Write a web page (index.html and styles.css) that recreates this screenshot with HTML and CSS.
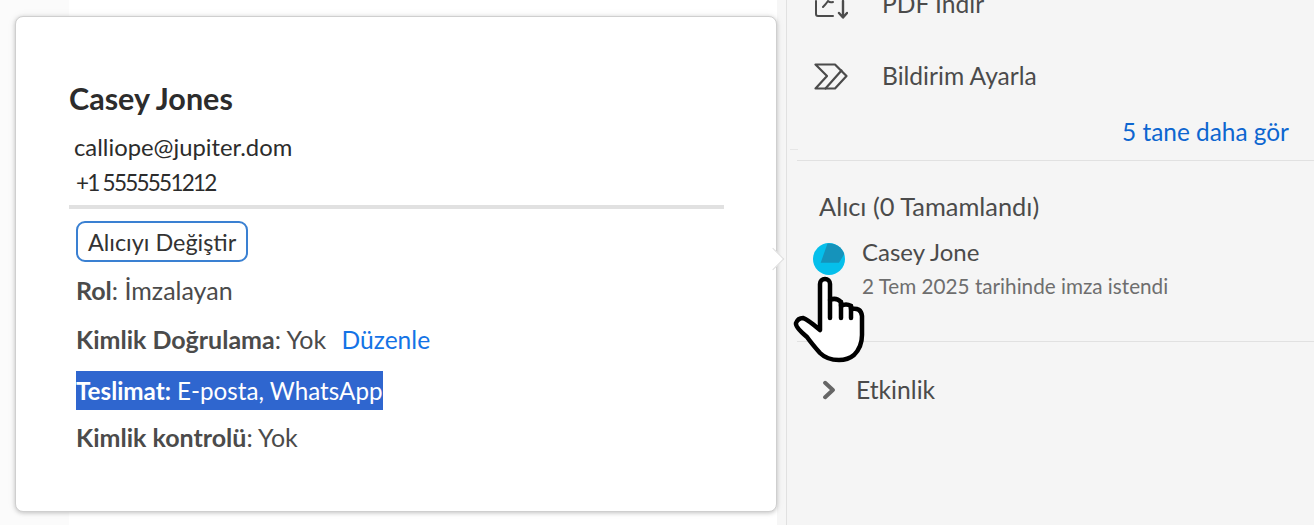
FILE: index.html
```html
<!DOCTYPE html>
<html lang="tr">
<head>
<meta charset="utf-8">
<title>Alıcı</title>
<link rel="stylesheet" href="styles.css">
</head>
<body>
<div class="page">
  <main class="doc"><div class="strip"></div></main>
  <aside class="panel">
    <div class="actions">
      <div class="action">
        <svg class="aicon" viewBox="0 0 34 34" fill="none" stroke="#4b4b4b" stroke-width="2" stroke-linecap="round" stroke-linejoin="round"><path d="M2 14v13q0 2 2 2h15"/><path d="M9 20q3-3 5-6 2 2 5 1"/><path d="M29 14v16M25 26l4 4.500 4-4.500" stroke-width="2.400"/></svg>
        <span>PDF İndir</span>
      </div>
      <div class="action">
        <svg class="aicon" viewBox="0 -5 34 34" fill="none" stroke="#4b4b4b" stroke-width="2.200" stroke-linecap="round" stroke-linejoin="round"><path d="M1.500 1.500H21L32.500 13 21 25.500H1.500L13 13z"/><path d="M27.500 7.500 11.500 25.500"/></svg>
        <span class="label-low">Bildirim Ayarla</span>
      </div>
      <a class="more">5 tane daha gör</a>
    </div>
    <section class="recipients">
      <h2 class="rtitle">Alıcı (0 Tamamlandı)</h2>
      <div class="recipient">
        <svg class="avatar" viewBox="0 0 32 32"><circle cx="16" cy="16" r="16" fill="#05bfeb"/><path d="M14.500.5 7.700 19.700H26L31.300 11A16 16 0 0 0 14.500.5z" fill="#1593bb"/></svg>
        <div class="rinfo">
          <div class="rname">Casey Jone</div>
          <div class="rdate">2 Tem 2025 tarihinde imza istendi</div>
        </div>
      </div>
    </section>
    <div class="activity">
      <svg class="chev" viewBox="0 0 12 18" fill="none" stroke="#666" stroke-width="3.600" stroke-linecap="round" stroke-linejoin="round"><path d="M2.500 2.500 9.500 9l-7 6.500"/></svg>
      <span>Etkinlik</span>
    </div>
  </aside>
</div>

<div class="popover">
  <h1 class="name">Casey Jones</h1>
  <div class="email">calliope@jupiter.dom</div>
  <div class="phone">+1 5555551212</div>
  <hr class="rule">
  <button class="change">Alıcıyı Değiştir</button>
  <p class="row row-role"><b>Rol</b>: İmzalayan</p>
  <p class="row row-auth"><b>Kimlik Doğrulama</b>: Yok <a class="edit">Düzenle</a></p>
  <p class="row row-del"><span class="sel"><b>Teslimat:</b> E-posta, WhatsApp</span></p>
  <p class="row row-id"><b>Kimlik kontrolü</b>: Yok</p>
</div>

<svg class="hand" viewBox="0 0 78 92" fill="#fff" stroke="#000" stroke-width="4.500" stroke-linecap="round" stroke-linejoin="round">
  <path d="M30 56V10a5 5 0 0 1 10 0v16q6-3 11 2v4q5-3 10 0v3q10-2 11 7v19q0 12-8 20-6 5-15 5-12 0-19-7-8-9-13-16Q5 53 6 49 8 44 13 44 17 45 30 56z"/>
  <path d="M40 26v18M51 28v16M61 32v12" fill="none"/>
</svg>
</body>
</html>
```
FILE: styles.css
```css
* { box-sizing: border-box; }
html, body { margin: 0; height: 525px; overflow: hidden; background: #fff; }
body { font-family: Lato, "Noto Sans", sans-serif; color: #4b4b4b; position: relative; }
.page { display: flex; height: 525px; }
.doc { width: 786px; flex: none; display: flex; justify-content: space-between; }
.doc::after { content: ""; width: 9px; background: #f6f6f6; }
.strip { width: 69px; background: #fbfbfb; }
.panel { flex: 1; background: #f5f5f5; border-left: 1px solid #e1e1e1; display: flex; flex-direction: column; }
.actions { position: relative; margin-left: 10px; margin-top: -14px; padding-left: 17px; display: flex; flex-direction: column; flex: none; height: 175px; border-bottom: 1px solid #e1e1e1; }
.actions::before { content: ""; position: absolute; left: -7px; bottom: 10px; width: 8px; height: 1px; background: #e6e6e6; }
.action { display: flex; align-items: center; gap: 34px; height: 35px; font-size: 24.600px; margin-bottom: 36px; }
.label-low { padding-top: 2px; }
.aicon { width: 34px; height: 34px; flex: none; }
.more { align-self: flex-end; margin-right: 25px; color: #0d66d0; font-size: 24.400px; line-height: 30px; margin-top: -11px; }
.recipients { height: 181px; border-bottom: 1px solid #e1e1e1; margin-left: 10px; padding: 30px 0 0 22px; }
.rtitle { margin: 0; font-size: 25.400px; font-weight: 400; line-height: 30px; }
.recipient { display: flex; gap: 17px; margin-top: 16px; margin-left: -6px; }
.avatar { width: 32px; height: 32px; flex: none; margin-top: 6px; }
.rname { font-size: 24px; line-height: 30px; }
.rdate { font-size: 20.700px; line-height: 28px; color: #6e6e6e; margin-top: 5px; }
.activity { display: flex; align-items: center; gap: 20px; margin: 33px 0 0 35px; font-size: 24.700px; line-height: 30px; }
.chev { width: 14px; height: 20px; flex: none; }
.popover { position: absolute; left: 15px; top: 16px; width: 762px; height: 496px; background: #fff; border: 1px solid #cfcfcf; border-radius: 8px; box-shadow: 0 1px 4px rgba(0,0,0,.2), 0 0 10px rgba(0,0,0,.06); padding: 63px 52px 0 53px; }
.popover::after { content: ""; position: absolute; right: -5px; top: 234px; width: 15px; height: 15px; background: #fff; border-top: 1px solid #ddd; border-right: 1px solid #ddd; transform: rotate(45deg); }
.name { margin: 0; font-size: 30.500px; line-height: 36px; font-weight: 700; color: #2c2c2c; }
.email { margin: 14px 0 0 5px; font-size: 23.800px; line-height: 34px; color: #2c2c2c; }
.phone { margin: 2px 0 0 7px; font-size: 22.500px; letter-spacing: -1.750px; line-height: 34px; color: #2c2c2c; }
.rule { margin: 5px 0 0; height: 4px; background: #e1e1e1; border: 0; }
.change { display: block; margin: 12px 0 0 7px; height: 41px; padding: 0 10px; background: #fff; border: 2px solid #3a80d2; border-radius: 9px; font: inherit; font-size: 23.400px; color: #333; }
.row { margin: 0 0 0 7px; font-size: 25px; line-height: 32px; }
.row b { font-weight: 700; }
.row-role { margin-top: 12px; }
.row-auth { margin-top: 17px; }
.row-del { margin-top: 15px; }
.row-id { margin-top: 11px; }
.edit { color: #1473e6; margin-left: 9px; font-size: 24.600px; }
.sel { background: #2f66cf; color: #fff; display: inline-block; font-size: 24.200px; line-height: 39px; height: 39px; }
.hand { position: absolute; left: 790px; top: 274px; width: 78px; height: 92px; }
```
